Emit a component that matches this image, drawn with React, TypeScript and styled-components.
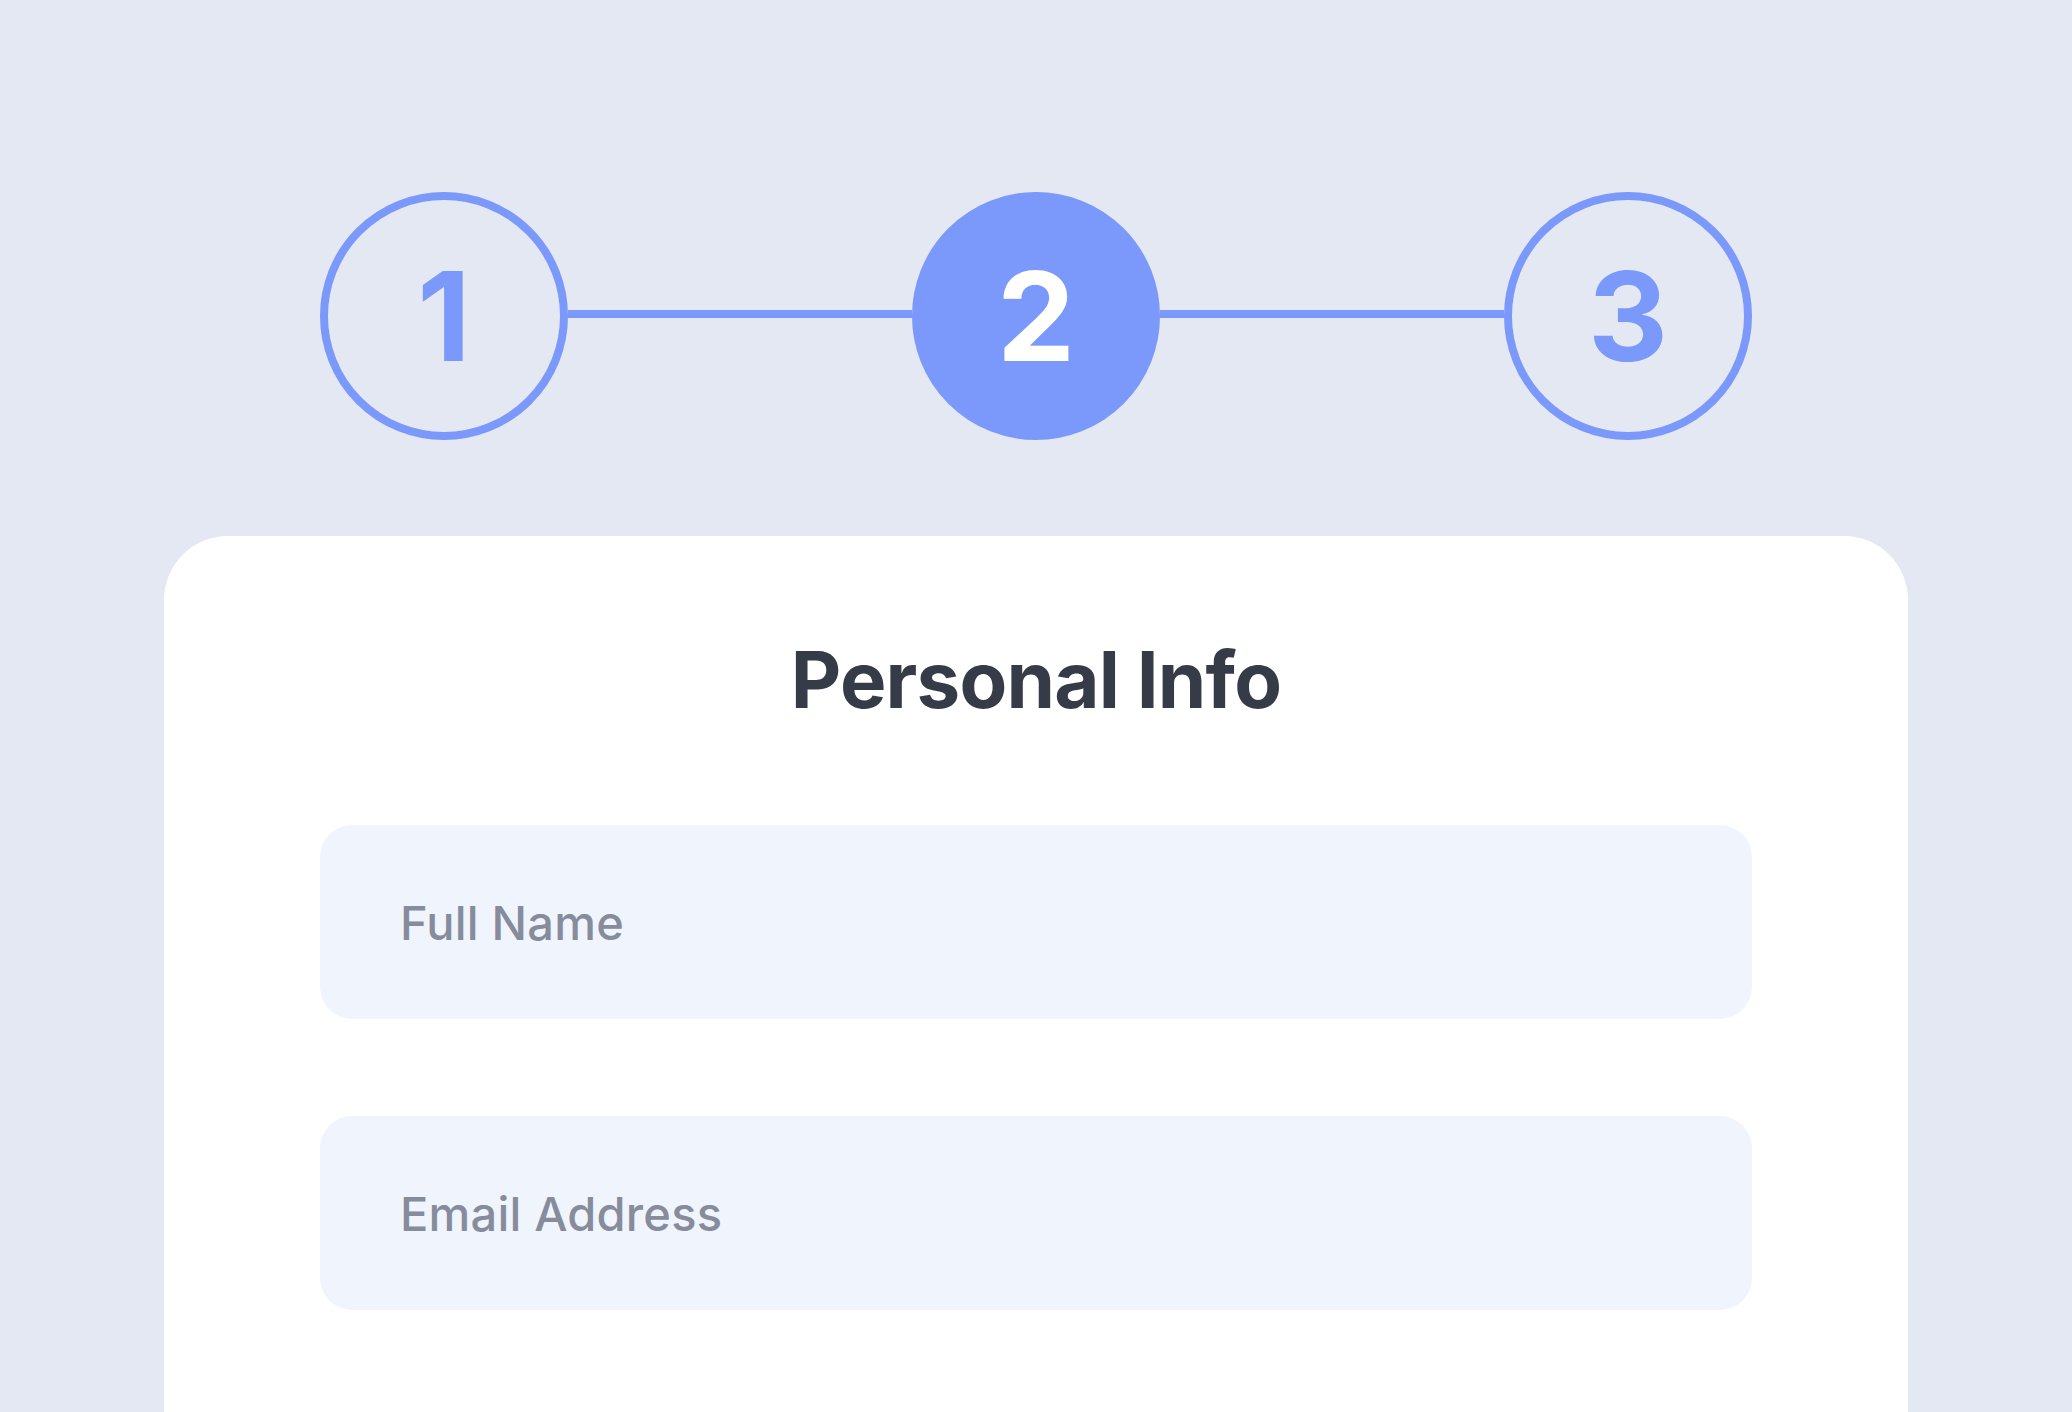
import React from "react";
import styled, { createGlobalStyle } from "styled-components";

const GlobalStyle = createGlobalStyle`
  html, body {
    margin: 0;
    padding: 0;
    background: #e3e8f3;
    font-family: Inter, "Noto Sans", "Liberation Sans", sans-serif;
  }
  #root { min-height: 100vh; }
`;

const Page = styled.div`
  width: 100%;
  min-height: 100vh;
  box-sizing: border-box;
  padding-top: 192px;
  display: flex;
  flex-direction: column;
  align-items: center;
  overflow: hidden;
`;

const Stepper = styled.div`
  width: 1432px;
  display: flex;
  align-items: center;
`;

const StepCircle = styled.div<{ $active?: boolean }>`
  width: 248px;
  height: 248px;
  box-sizing: border-box;
  flex: none;
  border-radius: 50%;
  border: 8px solid #7b98fb;
  background: ${(p) => (p.$active ? "#7b98fb" : "transparent")};
  color: ${(p) => (p.$active ? "#ffffff" : "#7b98fb")};
  display: flex;
  align-items: center;
  justify-content: center;
  font-size: 124px;
  font-weight: 700;
  line-height: 1;
`;

const Connector = styled.div`
  flex: 1;
  height: 8px;
  background: #7b98fb;
  align-self: flex-start;
  margin-top: 118px;
`;

const Card = styled.div`
  margin-top: 96px;
  width: 1744px;
  min-height: 1000px;
  box-sizing: border-box;
  background: #ffffff;
  border-radius: 64px 64px 0 0;
  padding: 100px 156px 0;
  display: flex;
  flex-direction: column;
  align-items: stretch;
`;

const Title = styled.h1`
  margin: 0 0 101px;
  text-align: center;
  font-size: 78px;
  line-height: 88px;
  font-weight: 700;
  letter-spacing: -0.8px;
  color: #363b48;
`;

const Field = styled.div`
  height: 194px;
  box-sizing: border-box;
  background: #f0f5fd;
  border-radius: 32px;
  padding: 0 80px;
  display: flex;
  align-items: center;
  & + & {
    margin-top: 97px;
  }
`;

const Placeholder = styled.span`
  font-size: 47px;
  font-weight: 500;
  letter-spacing: 0.2px;
  color: #868c9c;
`;

const steps = [1, 2, 3];

export default function App() {
  return (
    <>
      <GlobalStyle />
      <Page>
        <Stepper>
          {steps.map((s, i) => (
            <React.Fragment key={s}>
              {i > 0 && <Connector />}
              <StepCircle $active={s === 2}>{s}</StepCircle>
            </React.Fragment>
          ))}
        </Stepper>
        <Card>
          <Title>Personal Info</Title>
          <Field>
            <Placeholder>Full Name</Placeholder>
          </Field>
          <Field>
            <Placeholder>Email Address</Placeholder>
          </Field>
        </Card>
      </Page>
    </>
  );
}
